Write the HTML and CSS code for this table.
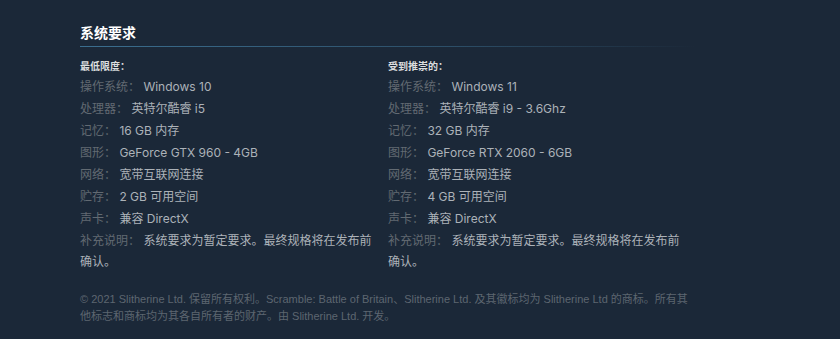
FILE: index.html
```html
<!DOCTYPE html>
<html lang="zh-CN">
<head>
<meta charset="utf-8">
<title>系统要求</title>
<link rel="stylesheet" href="styles.css">
</head>
<body>
<div class="page">
  <h2 class="section-title">系统要求</h2>
  <div class="sysreq">
    <div class="col">
      <div class="col-title">最低限度：</div>
      <ul class="req-list">
        <li><span class="lbl">操作系统：</span> Windows 10</li>
        <li><span class="lbl">处理器：</span> 英特尔酷睿 i5</li>
        <li><span class="lbl">记忆：</span> 16 GB 内存</li>
        <li><span class="lbl">图形：</span> GeForce GTX 960 - 4GB</li>
        <li><span class="lbl">网络：</span> 宽带互联网连接</li>
        <li><span class="lbl">贮存：</span> 2 GB 可用空间</li>
        <li><span class="lbl">声卡：</span> 兼容 DirectX</li>
        <li><span class="lbl">补充说明：</span> 系统要求为暂定要求。最终规格将在发布前确认。</li>
      </ul>
    </div>
    <div class="col">
      <div class="col-title">受到推崇的：</div>
      <ul class="req-list">
        <li><span class="lbl">操作系统：</span> Windows 11</li>
        <li><span class="lbl">处理器：</span> 英特尔酷睿 i9 - 3.6Ghz</li>
        <li><span class="lbl">记忆：</span> 32 GB 内存</li>
        <li><span class="lbl">图形：</span> GeForce RTX 2060 - 6GB</li>
        <li><span class="lbl">网络：</span> 宽带互联网连接</li>
        <li><span class="lbl">贮存：</span> 4 GB 可用空间</li>
        <li><span class="lbl">声卡：</span> 兼容 DirectX</li>
        <li><span class="lbl">补充说明：</span> 系统要求为暂定要求。最终规格将在发布前确认。</li>
      </ul>
    </div>
  </div>
  <p class="legal">© 2021 Slitherine Ltd. 保留所有权利。Scramble: Battle of Britain、Slitherine Ltd. 及其徽标均为 Slitherine Ltd 的商标。所有其他标志和商标均为其各自所有者的财产。由 Slitherine Ltd. 开发。</p>
</div>
</body>
</html>
```

FILE: styles.css
```css
html, body {
  margin: 0;
  padding: 0;
  background: #1b2838;
}

body {
  font-family: "Liberation Sans", Arial, "Noto Sans CJK SC", sans-serif;
  color: #acb2b8;
}

.page {
  width: 616px;
  padding: 23px 0 0 80px;
}

.section-title {
  margin: 0;
  font-size: 14px;
  line-height: 20px;
  font-weight: bold;
  color: #ffffff;
  padding-bottom: 4px;
  background-image: linear-gradient(to right, #3b6e8f 0%, rgba(59, 110, 143, 0.55) 60%, rgba(59, 110, 143, 0) 100%);
  background-repeat: no-repeat;
  background-position: left bottom;
  background-size: 100% 1px;
}

.sysreq {
  display: grid;
  grid-template-columns: 300px 300px;
  column-gap: 8px;
  margin-top: 12px;
}

.col-title {
  font-size: 10px;
  line-height: 16px;
  font-weight: bold;
  color: #dcdedf;
  margin-bottom: 1px;
}

.req-list {
  list-style: none;
  margin: 0;
  padding: 0;
}

.req-list li {
  font-family: Inter, "Noto Sans CJK SC", sans-serif;
  font-size: 12px;
  line-height: 21px;
  margin-bottom: 1px;
  color: #acb2b8;
}

.lbl {
  color: #626a72;
}

.legal {
  margin: 18px 0 0 0;
  font-size: 11px;
  line-height: 17px;
  color: #5d6670;
}
```
